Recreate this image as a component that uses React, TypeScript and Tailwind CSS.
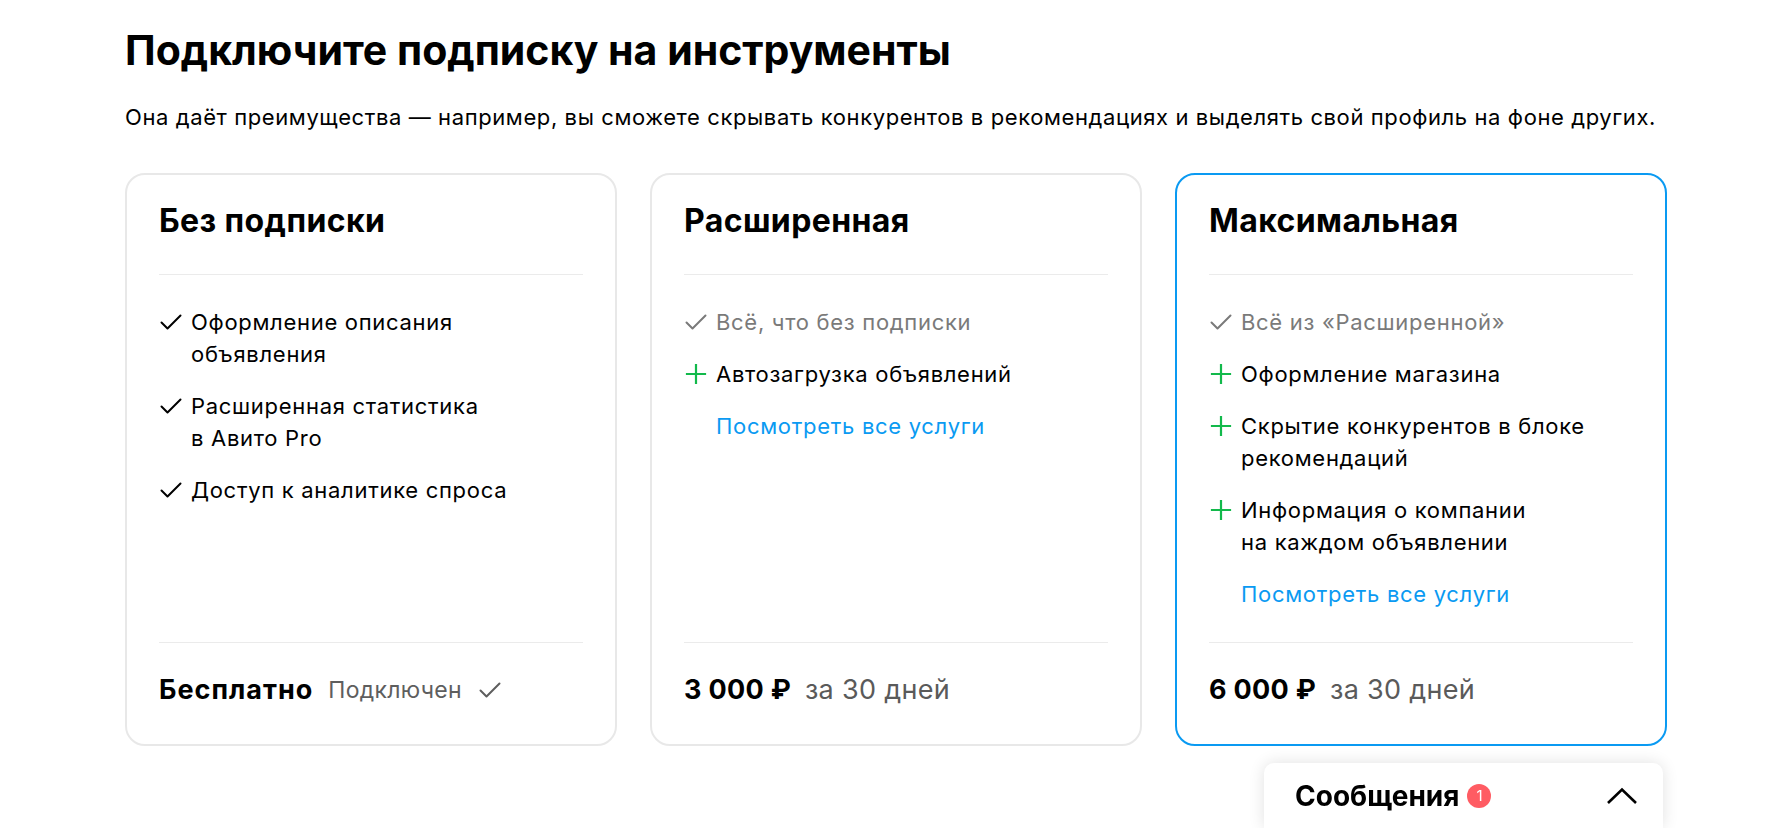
type Item = { kind: 'check' | 'muted' | 'plus'; text: string[] };

interface Plan {
  title: string;
  items: Item[];
  link?: boolean;
  active?: boolean;
  price: string;
  note: string;
  connected?: boolean;
}

const plans: Plan[] = [
  {
    title: 'Без подписки',
    items: [
      { kind: 'check', text: ['Оформление описания', 'объявления'] },
      { kind: 'check', text: ['Расширенная статистика', 'в Авито Pro'] },
      { kind: 'check', text: ['Доступ к аналитике спроса'] },
    ],
    price: 'Бесплатно',
    note: 'Подключен',
    connected: true,
  },
  {
    title: 'Расширенная',
    items: [
      { kind: 'muted', text: ['Всё, что без подписки'] },
      { kind: 'plus', text: ['Автозагрузка объявлений'] },
    ],
    link: true,
    price: '3 000 ₽',
    note: 'за 30 дней',
  },
  {
    title: 'Максимальная',
    items: [
      { kind: 'muted', text: ['Всё из «Расширенной»'] },
      { kind: 'plus', text: ['Оформление магазина'] },
      { kind: 'plus', text: ['Скрытие конкурентов в блоке', 'рекомендаций'] },
      { kind: 'plus', text: ['Информация о компании', 'на каждом объявлении'] },
    ],
    link: true,
    active: true,
    price: '6 000 ₽',
    note: 'за 30 дней',
  },
];

function CheckIcon({ className }: { className?: string }) {
  return (
    <svg viewBox="0 0 24 24" className={className} fill="none" stroke="currentColor" strokeWidth="2" strokeLinecap="round" strokeLinejoin="round">
      <path d="M2.5 12.5 8.5 18.5 21.5 5.5" />
    </svg>
  );
}

function PlusIcon({ className }: { className?: string }) {
  return (
    <svg viewBox="0 0 24 24" className={className} fill="none" stroke="currentColor" strokeWidth="2.2" strokeLinecap="square">
      <path d="M12 3v18M3 12h18" />
    </svg>
  );
}

function FeatureRow({ item }: { item: Item }) {
  const muted = item.kind === 'muted';
  return (
    <li className="flex gap-2">
      <span className="w-6 h-8 flex items-center shrink-0">
        {item.kind === 'plus' ? (
          <PlusIcon className="w-6 h-6 text-[#12b94b]" />
        ) : (
          <CheckIcon className={muted ? 'w-6 h-6 text-[#7a7a7a]' : 'w-6 h-6 text-black'} />
        )}
      </span>
      <span className={muted ? 'text-[#7a7a7a]' : 'text-black'}>
        {item.text.map((line) => (
          <span key={line} className="block">{line}</span>
        ))}
      </span>
    </li>
  );
}

function PlanCard({ plan }: { plan: Plan }) {
  return (
    <div
      className={
        plan.active
          ? 'flex flex-col rounded-[20px] border-2 border-[#0a9af2] bg-white px-8'
          : 'flex flex-col rounded-[20px] border-2 border-[#e8e8e8] bg-white px-8'
      }
    >
      <h2 className="pt-[30px] text-[32px] leading-8 font-bold text-black tracking-[0.4px]">{plan.title}</h2>
      <div className="mt-[37px] h-px bg-[#ebebeb]" />

      <div className="flex-1 pt-[31px] pb-[32px]">
        <ul className="flex flex-col gap-5 text-[22px] leading-8 tracking-[0.7px]">
          {plan.items.map((item) => (
            <FeatureRow key={item.text[0]} item={item} />
          ))}
          {plan.link && (
            <li className="pl-8">
              <a href="#" className="text-[#0a9af2]">Посмотреть все услуги</a>
            </li>
          )}
        </ul>
      </div>

      <div className="h-px bg-[#ebebeb]" />
      <div className="flex items-center pt-[31px] pb-[38px] leading-8">
        {plan.connected ? (
          <>
            <span className="text-[27px] font-bold text-black tracking-[1px]">{plan.price}</span>
            <span className="ml-[15px] text-[23px] text-[#5e5e5e] tracking-[0.3px]">{plan.note}</span>
            <CheckIcon className="ml-4 w-6 h-6 text-[#5e5e5e]" />
          </>
        ) : (
          <>
            <span className="text-[27px] font-bold text-black tracking-[0.3px]">{plan.price}</span>
            <span className="ml-[14px] text-[27px] text-[#5a5a5a] tracking-[0.3px]">{plan.note}</span>
          </>
        )}
      </div>
    </div>
  );
}

export default function App() {
  return (
    <div className="min-h-screen bg-white font-['Inter','Noto_Sans',sans-serif] text-black">
      <div className="mx-auto w-[1542px] pt-[26px]">
        <h1 className="text-[41px] leading-[48px] font-bold">Подключите подписку на инструменты</h1>
        <p className="mt-[29px] text-[22px] leading-7 tracking-[0.6px]">
          Она даёт преимущества — например, вы сможете скрывать конкурентов в рекомендациях и выделять свой профиль на фоне других.
        </p>

        <div className="mt-[42px] grid grid-cols-3 gap-[33px]">
          {plans.map((plan) => (
            <PlanCard key={plan.title} plan={plan} />
          ))}
        </div>
      </div>

      {/* Messenger widget */}
      <div className="fixed bottom-0 right-[129px] w-[399px] h-[65px] rounded-t-[10px] bg-white shadow-[0_0_16px_rgba(0,0,0,0.12)] flex items-center pl-[31px] pr-[25px]">
        <span className="text-[28px] font-bold text-black">Сообщения</span>
        <span className="ml-[8px] w-6 h-6 rounded-full bg-[#ff5c63] text-white text-[15px] leading-6 text-center">1</span>
        <svg viewBox="0 0 32 18" className="ml-auto w-8 h-[18px] text-black" fill="none" stroke="currentColor" strokeWidth="2.6">
          <path d="M2 16 16 2.5 30 16" />
        </svg>
      </div>
    </div>
  );
}
